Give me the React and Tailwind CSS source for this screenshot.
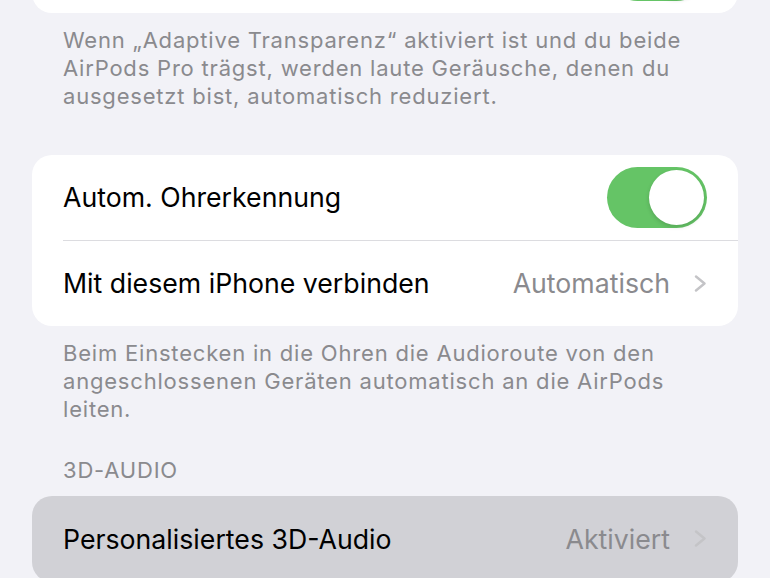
function Toggle() {
  return (
    <div className="w-[100px] h-[61px] rounded-full bg-[#65c466] flex items-center justify-end px-[3px]">
      <div className="w-[55px] h-[55px] rounded-full bg-white shadow-[0_2px_4px_rgba(0,0,0,0.15)]" />
    </div>
  );
}

// Chevron im iOS-Stil
function Chevron() {
  return (
    <svg width="13" height="17" viewBox="0 0 13 17" fill="none" className="text-[#c4c4c7]">
      <path d="M2 1.5 L10.5 8.5 L2 15.5" stroke="currentColor" strokeWidth="2.4" strokeLinecap="round" strokeLinejoin="round" />
    </svg>
  );
}

function Footer({ lines }) {
  return (
    <p className="px-[31px] text-[22px] leading-[28px] text-[#8a8a8e] tracking-[0.8px] whitespace-nowrap">
      {lines.map((l, i) => (
        <span key={i} className="block">
          {l}
        </span>
      ))}
    </p>
  );
}

export default function App() {
  return (
    <div
      className="w-[770px] h-[578px] overflow-hidden bg-[#f2f2f7] px-[32px]"
      style={{ fontFamily: "Inter, 'Noto Sans', sans-serif" }}
    >
      {/* Karte oben (abgeschnitten) */}
      <div className="-mt-[73px] bg-white rounded-[20px] h-[86px] flex items-center justify-end pr-[31px]">
        <Toggle />
      </div>

      <div className="mt-[13px]">
        <Footer
          lines={[
            "Wenn „Adaptive Transparenz“ aktiviert ist und du beide",
            "AirPods Pro trägst, werden laute Geräusche, denen du",
            "ausgesetzt bist, automatisch reduziert.",
          ]}
        />
      </div>

      <div className="mt-[45px] bg-white rounded-[20px] overflow-hidden">
        <div className="h-[85px] flex items-center justify-between pl-[31px] pr-[31px]">
          <span className="text-[26.7px] text-black">Autom. Ohrerkennung</span>
          <Toggle />
        </div>
        <div className="ml-[31px] h-px bg-[#dcdce0]" />
        <div className="h-[85px] flex items-center justify-between pl-[31px] pr-[31px]">
          <span className="text-[26.7px] text-black">Mit diesem iPhone verbinden</span>
          <div className="flex items-center gap-[24px]">
            <span className="text-[26.7px] text-[#8a8a8e]">Automatisch</span>
            <Chevron />
          </div>
        </div>
      </div>

      <div className="mt-[13px]">
        <Footer
          lines={[
            "Beim Einstecken in die Ohren die Audioroute von den",
            "angeschlossenen Geräten automatisch an die AirPods",
            "leiten.",
          ]}
        />
      </div>

      <div className="mt-[33px] px-[31px] text-[22px] leading-[28px] text-[#8a8a8e] tracking-[0.8px]">3D-AUDIO</div>

      <div className="mt-[12px] bg-[#d1d1d6] rounded-[20px]">
        <div className="h-[86px] flex items-center justify-between pl-[31px] pr-[31px]">
          <span className="text-[26.7px] text-black">Personalisiertes 3D-Audio</span>
          <div className="flex items-center gap-[24px]">
            <span className="text-[26.7px] text-[#8a8a8e]">Aktiviert</span>
            <Chevron />
          </div>
        </div>
      </div>
    </div>
  );
}
